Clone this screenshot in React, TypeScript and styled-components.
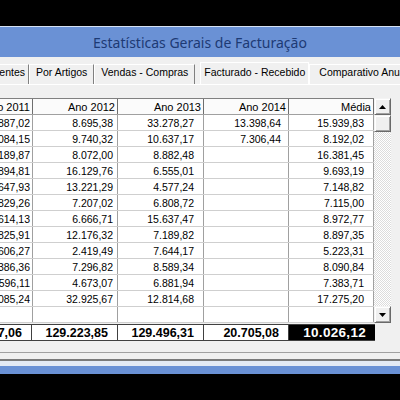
import React from "react";
import styled, { createGlobalStyle } from "styled-components";

const Global = createGlobalStyle`
  html, body { margin: 0; padding: 0; background: #000; }
  body { font-family: "Liberation Sans", Arial, sans-serif; color: #000; }
  #root { width: 400px; height: 400px; overflow: hidden; }
`;

const Screen = styled.div`
  width: 400px;
  height: 400px;
  box-sizing: border-box;
  padding-top: 26px;
  background: #000;
  overflow: hidden;
`;

const Window = styled.div`
  display: flex;
  flex-direction: column;
  border-top: 1px solid #d6e2f3;
`;

const TitleBar = styled.div`
  height: 30px;
  background: #6a91d5;
  color: #1d3a74;
  display: flex;
  align-items: center;
  justify-content: center;
  font-family: "Noto Sans", "Open Sans", sans-serif;
  font-size: 14px;
  white-space: nowrap;
`;

const Body = styled.div`
  background: #f0f0f0;
  padding-bottom: 6px;
  border-bottom: 2px solid #7a7a7a;
`;

const TabStrip = styled.div`
  height: 27px;
  box-sizing: border-box;
  display: flex;
  align-items: flex-end;
  overflow: hidden;
  font-size: 10.5px;
  white-space: nowrap;
`;

const Tab = styled.div<{ $active?: boolean }>`
  flex: none;
  box-sizing: border-box;
  height: ${(p) => (p.$active ? 22 : 20)}px;
  line-height: 16px;
  padding: 0 ${(p) => (p.$active ? 3 : 6)}px 4px;
  margin-left: ${(p) => (p.$active ? 5 : 0)}px;
  border-left: 1px solid #fff;
  border-top: 1px solid #fff;
  border-right: 1px solid ${(p) => (p.$active ? "#fff" : "#808080")};
  display: flex;
  align-items: flex-end;
`;

const ClippedTab = styled(Tab)`
  width: 29px;
  border-left: none;
  padding: 0 3px 4px 0;
  justify-content: flex-end;
  overflow: hidden;
`;

const OpenTab = styled(Tab)`
  border-right: none;
  padding-left: 9px;
`;

const Panel = styled.div`
  border-top: 1px solid #fff;
  border-bottom: 1px solid #a0a0a0;
  padding: 13px 9px 11px 0;
  display: flex;
  flex-direction: column;
`;

const GridArea = styled.div`
  display: flex;
  height: 225px;
`;

const Table = styled.div`
  width: 374px;
  display: flex;
  flex-direction: column;
  background: #fff;
`;

const COLS = "33px 85px 86px 85px 85px";

const HeaderRow = styled.div`
  display: grid;
  grid-template-columns: ${COLS};
  height: 17px;
  box-sizing: border-box;
  border-top: 1px solid #808080;
  border-bottom: 1px solid #a0a0a0;
  background: #fbfbfb;
`;

const HeadCell = styled.div`
  border-right: 1px solid #6e6e6e;
  display: flex;
  justify-content: flex-end;
  align-items: center;
  padding-right: 2px;
  overflow: hidden;
  white-space: nowrap;
  font-size: 11px;
`;

const Row = styled.div`
  display: grid;
  grid-template-columns: ${COLS};
  height: 16px;
  box-sizing: border-box;
  border-bottom: 1px solid #cfcfcf;
`;

const Cell = styled.div<{ $pad: number }>`
  border-right: 1px solid #a0a0a0;
  display: flex;
  justify-content: flex-end;
  align-items: center;
  padding-right: ${(p) => p.$pad}px;
  overflow: hidden;
  white-space: nowrap;
  font-size: 10.5px;
`;

const ScrollBar = styled.div`
  width: 17px;
  display: flex;
  flex-direction: column;
`;

const ScrollButton = styled.div`
  height: 17px;
  flex: none;
  box-sizing: border-box;
  background: #f0f0f0;
  border: 1px solid;
  border-color: #f4f4f4 #696969 #696969 #f4f4f4;
  box-shadow: inset 1px 1px #fff, inset -1px -1px #a0a0a0;
  display: flex;
  align-items: center;
  justify-content: center;
`;

const Track = styled.div`
  flex: 1;
  background: repeating-conic-gradient(#ffffff 0 25%, #dcdcdc 0 50%) 0 0 / 2px 2px;
`;

const TotalsRow = styled.div`
  display: grid;
  grid-template-columns: 32px 86px 86px 85px 86px;
  width: 375px;
  margin-top: 1px;
  height: 17px;
  box-sizing: border-box;
  border-top: 1px solid #404040;
  border-bottom: 1px solid #404040;
  background: #fff;
`;

const TotalCell = styled.div<{ $dark?: boolean }>`
  border-right: ${(p) => (p.$dark ? "none" : "1px solid #404040")};
  background: ${(p) => (p.$dark ? "#000" : "#fff")};
  color: ${(p) => (p.$dark ? "#fff" : "#000")};
  font-weight: bold;
  font-size: ${(p) => (p.$dark ? 13.5 : 12.5)}px;
  letter-spacing: ${(p) => (p.$dark ? 0.3 : 0)}px;
  display: flex;
  justify-content: flex-end;
  align-items: center;
  padding-right: 9px;
  overflow: hidden;
  white-space: nowrap;
`;

const BottomEdge = styled.div`
  height: 5px;
  background: #e4eaf4;
`;

const BottomBlue = styled.div`
  height: 8px;
  background: #6a91d5;
`;

const Arrow = ({ down }: { down?: boolean }) => (
  <svg width="7" height="4" viewBox="0 0 7 4">
    <polygon points={down ? "0,0 7,0 3.5,4" : "3.5,0 7,4 0,4"} fill="#000" />
  </svg>
);

const headers = ["Ano 2011", "Ano 2012", "Ano 2013", "Ano 2014", "Média"];
const pads = [2, 4, 9, 7, 9];

const rows: string[][] = [
  ["12.887,02", "8.695,38", "33.278,27", "13.398,64", "15.939,83"],
  ["9.084,15", "9.740,32", "10.637,17", "7.306,44", "8.192,02"],
  ["24.189,87", "8.072,00", "8.882,48", "", "16.381,45"],
  ["6.894,81", "16.129,76", "6.555,01", "", "9.693,19"],
  ["3.647,93", "13.221,29", "4.577,24", "", "7.148,82"],
  ["7.829,26", "7.207,02", "6.808,72", "", "7.115,00"],
  ["4.614,13", "6.666,71", "15.637,47", "", "8.972,77"],
  ["7.825,91", "12.176,32", "7.189,82", "", "8.897,35"],
  ["5.606,27", "2.419,49", "7.644,17", "", "5.223,31"],
  ["8.386,36", "7.296,82", "8.589,34", "", "8.090,84"],
  ["10.596,11", "4.673,07", "6.881,94", "", "7.383,71"],
  ["6.085,24", "32.925,67", "12.814,68", "", "17.275,20"],
  ["", "", "", "", ""],
];

const totals = ["107.647,06", "129.223,85", "129.496,31", "20.705,08"];

export default function App() {
  return (
    <>
      <Global />
      <Screen>
        <Window>
          <TitleBar>Estatísticas Gerais de Facturação</TitleBar>
          <Body>
            <TabStrip>
              <ClippedTab>Por Clientes</ClippedTab>
              <Tab>Por Artigos</Tab>
              <Tab>Vendas - Compras</Tab>
              <Tab $active>Facturado - Recebido</Tab>
              <OpenTab>Comparativo Anual</OpenTab>
            </TabStrip>
            <Panel>
              <GridArea>
                <Table>
                  <HeaderRow>
                    {headers.map((h) => (
                      <HeadCell key={h}>{h}</HeadCell>
                    ))}
                  </HeaderRow>
                  {rows.map((r, i) => (
                    <Row key={i}>
                      {r.map((v, j) => (
                        <Cell key={j} $pad={pads[j]}>
                          {v}
                        </Cell>
                      ))}
                    </Row>
                  ))}
                </Table>
                <ScrollBar>
                  <ScrollButton>
                    <Arrow />
                  </ScrollButton>
                  <ScrollButton />
                  <Track />
                  <ScrollButton>
                    <Arrow down />
                  </ScrollButton>
                </ScrollBar>
              </GridArea>
              <TotalsRow>
                {totals.map((t) => (
                  <TotalCell key={t}>{t}</TotalCell>
                ))}
                <TotalCell $dark>10.026,12</TotalCell>
              </TotalsRow>
            </Panel>
          </Body>
          <BottomEdge />
          <BottomBlue />
        </Window>
      </Screen>
    </>
  );
}
